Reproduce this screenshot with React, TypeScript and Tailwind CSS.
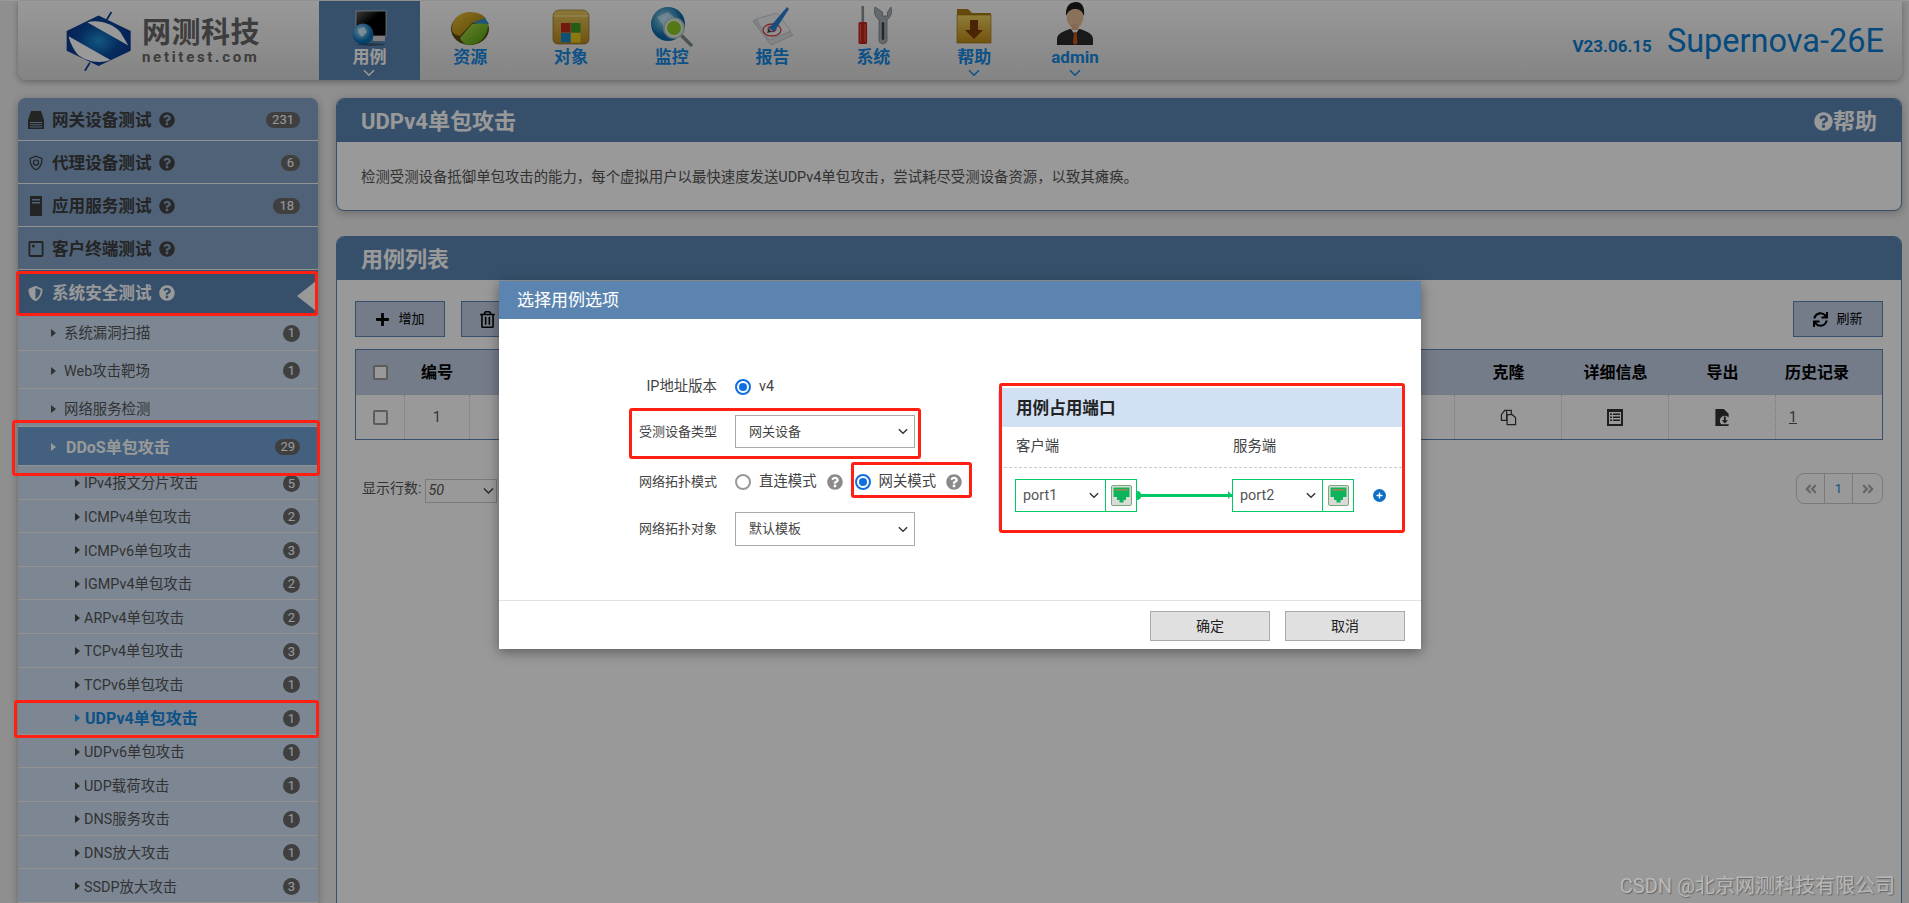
import React from "react";
import { FaQuestionCircle, FaPlus, FaSync, FaRegTrashAlt, FaShieldAlt, FaAngleDoubleLeft, FaAngleDoubleRight } from "react-icons/fa";

const Chevron = ({ className = "" }: { className?: string }) => (
  <svg viewBox="0 0 12 8" className={className} fill="none" stroke="currentColor" strokeWidth="1.6">
    <path d="M1 1.2 L6 6.2 L11 1.2" />
  </svg>
);

const Caret = ({ color = "#555" }: { color?: string }) => (
  <svg viewBox="0 0 5 8" className="w-[5px] h-[8px] shrink-0" fill={color}>
    <path d="M0 0 L5 4 L0 8 Z" />
  </svg>
);

const IconMonitor = () => (
  <svg viewBox="0 0 44 38" className="w-[44px] h-[38px]">
    <defs>
      <linearGradient id="scr" x1="0" y1="0" x2="1" y2="1"><stop offset="0" stopColor="#666" /><stop offset="0.45" stopColor="#000" /></linearGradient>
      <radialGradient id="glb" cx="0.4" cy="0.35"><stop offset="0" stopColor="#a6e4fa" /><stop offset="1" stopColor="#0d6fb5" /></radialGradient>
    </defs>
    <rect x="9" y="2" width="30" height="25" fill="url(#scr)" stroke="#ddd" strokeWidth="0.7" />
    <rect x="26" y="27" width="12" height="5" fill="#d0d0d0" />
    <circle cx="16" cy="25" r="10.5" fill="url(#glb)" />
    <path d="M11 20 L17 18 L20 23 L15 28 L12 25 Z" fill="#dff3fb" opacity="0.8" />
    <ellipse cx="24" cy="35.5" rx="14" ry="1.5" fill="#000" opacity="0.3" />
  </svg>
);

const IconPie = () => (
  <svg viewBox="0 0 44 38" className="w-[44px] h-[38px]">
    <defs>
      <linearGradient id="py" x1="0" y1="0" x2="1" y2="1"><stop offset="0" stopColor="#e8c23a" /><stop offset="1" stopColor="#9a7100" /></linearGradient>
      <linearGradient id="pg" x1="0" y1="0" x2="1" y2="1"><stop offset="0" stopColor="#b4e04a" /><stop offset="1" stopColor="#4c9a12" /></linearGradient>
    </defs>
    <ellipse cx="22" cy="20" rx="19" ry="16" fill="#5b4a10" />
    <path d="M4 20 C4 8 14 3 22 3 C30 3 36 6 38 10 L24 14 L12 27 C7 26 4 24 4 20 Z" fill="url(#py)" />
    <path d="M24 15 L40 13 C41 25 33 36 21 36 C17 36 14 33 12 29 Z" fill="url(#pg)" />
    <path d="M24 14 L37 9 L41 15 Z" fill="#2d8fc9" />
  </svg>
);

const IconFolderWin = () => (
  <svg viewBox="0 0 44 38" className="w-[44px] h-[38px]">
    <defs><linearGradient id="fg" x1="0" y1="0" x2="0" y2="1"><stop offset="0" stopColor="#e8c860" /><stop offset="1" stopColor="#b8881e" /></linearGradient></defs>
    <path d="M4 8 C4 3 7 1 11 1 H33 C37 1 40 3 40 8 V30 C40 33 38 35 35 35 H9 C6 35 4 33 4 30 Z" fill="url(#fg)" stroke="#7d5c14" strokeWidth="0.6" />
    <path d="M5 7 H39" stroke="#f6e6a6" strokeWidth="1" />
    <rect x="12" y="14" width="9.5" height="9.5" fill="#c42a1c" />
    <rect x="22" y="14" width="9.5" height="9.5" fill="#3f9c22" />
    <rect x="12" y="24" width="9.5" height="9.5" fill="#1688c6" />
    <rect x="22" y="24" width="9.5" height="9.5" fill="#e6c81e" />
  </svg>
);

const IconSearchGlobe = () => (
  <svg viewBox="0 0 44 42" className="w-[44px] h-[42px]">
    <defs><radialGradient id="g4" cx="0.4" cy="0.35"><stop offset="0" stopColor="#9fdcf0" /><stop offset="1" stopColor="#0c6aa6" /></radialGradient></defs>
    <circle cx="18" cy="19" r="17" fill="url(#g4)" />
    <path d="M7 12 L18 7 L24 12 L14 22 Z" fill="#d9f1f8" opacity="0.6" />
    <path d="M31 30 L41 40" stroke="#7d8b92" strokeWidth="3.4" strokeLinecap="round" />
    <circle cx="24" cy="23" r="10" fill="#ddeedd" stroke="#b8c4c4" strokeWidth="1.6" />
    <circle cx="24" cy="23" r="7" fill="#8cc825" />
  </svg>
);

const IconReport = () => (
  <svg viewBox="0 0 44 42" className="w-[44px] h-[42px]">
    <path d="M2 16 L24 10 L42 30 L20 40 Z" fill="#d9dde2" stroke="#a4a8ac" strokeWidth="0.6" />
    <path d="M5 14 L26 8 L40 26 L18 35 Z" fill="#eef0f3" stroke="#b0b4b8" strokeWidth="0.6" />
    <ellipse cx="21" cy="25" rx="9" ry="6" fill="none" stroke="#d84040" strokeWidth="1.3" />
    <ellipse cx="21" cy="24" rx="4" ry="2.6" fill="none" stroke="#d84040" strokeWidth="1.1" />
    <path d="M18 23 L36 2 L38 4 L23 27 Z" fill="#2a7fd0" />
    <path d="M18 23 L20 27 L16 28 Z" fill="#444" />
  </svg>
);

const IconTools = () => (
  <svg viewBox="0 0 44 42" className="w-[44px] h-[42px]">
    <rect x="10.5" y="1" width="2.6" height="16" fill="#8a8f92" />
    <rect x="7.5" y="17" width="8.6" height="22" rx="1.5" fill="#c4231c" />
    <path d="M9.5 19 V37 M14 19 V37" stroke="#e96a5c" strokeWidth="0.8" />
    <path d="M24 2 C22 10 26 13 28 15 V35 C28 40 36 40 36 35 V15 C38 13 42 10 40 2 L36.5 7 V11 H31.5 V7 Z" fill="#a9b0b4" stroke="#6c7276" strokeWidth="0.7" />
    <rect x="30.7" y="17" width="2.6" height="18" rx="1.3" fill="#3e4448" />
  </svg>
);

const IconFolderDown = () => (
  <svg viewBox="0 0 44 42" className="w-[44px] h-[42px]">
    <defs><linearGradient id="fd" x1="0" y1="0" x2="0" y2="1"><stop offset="0" stopColor="#f0cf62" /><stop offset="1" stopColor="#bb8a14" /></linearGradient></defs>
    <path d="M5 4 H16 L20 8 H39 V38 H5 Z" fill="#a97d14" />
    <rect x="5" y="10" width="34" height="28" fill="url(#fd)" stroke="#8d6a10" strokeWidth="0.6" />
    <path d="M18 15 H26 V25 H31 L22 34 L13 25 H18 Z" fill="#7d3d08" />
  </svg>
);

const IconMan = () => (
  <svg viewBox="0 0 44 46" className="w-[44px] h-[46px]">
    <path d="M4 44 V38 C4 32 12 30 17 28 H27 C32 30 40 32 40 38 V44 Z" fill="#2a2a2a" />
    <path d="M18 28 L22 34 L26 28 Z" fill="#f2f2f2" />
    <path d="M21 31 H23.4 L24.6 42 L22.2 44 L20 42 Z" fill="#c8561c" />
    <ellipse cx="22" cy="16" rx="8.4" ry="11" fill="#e7bd96" />
    <rect x="18.5" y="23" width="7" height="6" fill="#e0b08a" />
    <path d="M13 15 C12 4 18 1 23 1 C30 1 32 8 31 15 C29 10 27 8 22 8 C18 8 15 10 13 15 Z" fill="#1c1c1c" />
  </svg>
);

const Logo = () => (
  <svg viewBox="15 10 205 185" className="w-[68px] h-[62px]">
    <defs>
      <radialGradient id="lg" cx="0.5" cy="0.5" r="0.6"><stop offset="0" stopColor="#1f93d6" /><stop offset="0.5" stopColor="#0b4ca0" /><stop offset="1" stopColor="#0a2f86" /></radialGradient>
    </defs>
    <path d="M116 26 L213 72 V132 L116 178 L20 132 V72 Z" fill="url(#lg)" />
    <path d="M82 46 C115 36 160 50 182 76 L206 116 Z" fill="#fff" />
    <path d="M26 88 L152 160 C120 172 80 165 55 145 C42 130 30 108 26 88 Z" fill="#fff" />
    <path d="M140 40 L155 15" stroke="#0a3a90" strokeWidth="5" />
    <path d="M90 168 L75 192" stroke="#0a3a90" strokeWidth="5" />
  </svg>
);

const PortIcon = () => (
  <svg viewBox="0 0 21 21" className="w-[21px] h-[21px]">
    <rect x="0.5" y="0.5" width="20" height="20" rx="1.5" fill="#d9dcd6" stroke="#7ea87c" />
    <path d="M2.5 2.5 H18.5 V12 H15 V15 H12.5 V17.5 H8.5 V15 H6 V12 H2.5 Z" fill="#0cb45c" />
    <rect x="4" y="4" width="13" height="1.6" fill="#9c8b50" />
  </svg>
);

const Q = ({ className = "" }: { className?: string }) => <FaQuestionCircle className={className} />;

const Badge = ({ n, wide = false }: { n: string; wide?: boolean }) => (
  <span className={`ml-auto flex items-center justify-center rounded-full bg-[#6a6a6a] text-white ${wide ? "h-[16px] px-[6px] text-[13px]" : "h-[17px] w-[17px] text-[13px]"}`}>
    {n}
  </span>
);

const topRows: { t: string; n?: string; icon: React.ReactNode }[] = [
  {
    t: "网关设备测试",
    n: "231",
    icon: (
      <svg viewBox="0 0 16 18" className="w-[16px] h-[18px]" fill="currentColor">
        <path d="M3 0 H13 L16 9 V18 H0 V9 Z M2 11 V12 H14 V11 Z M2 13.2 V14.2 H14 V13.2 Z M2 15.4 V16.4 H14 V15.4 Z" fillRule="evenodd" />
      </svg>
    ),
  },
  {
    t: "代理设备测试",
    n: "6",
    icon: (
      <svg viewBox="0 0 16 16" className="w-[16px] h-[16px]" fill="none" stroke="currentColor" strokeWidth="1.2">
        <path d="M8 1.2 L14 3.4 C14 9 12 13 8 14.8 C4 13 2 9 2 3.4 Z" />
        <circle cx="8" cy="7.6" r="2.6" />
      </svg>
    ),
  },
  {
    t: "应用服务测试",
    n: "18",
    icon: (
      <svg viewBox="0 0 16 20" className="w-[16px] h-[20px]" fill="currentColor">
        <path d="M2 0 H14 V20 H2 Z M4 3 V4.5 H12 V3 Z M4 6 V7.5 H12 V6 Z" fillRule="evenodd" />
      </svg>
    ),
  },
  {
    t: "客户终端测试",
    icon: (
      <svg viewBox="0 0 16 16" className="w-[16px] h-[16px]" fill="none" stroke="currentColor" strokeWidth="1.8">
        <rect x="1.4" y="1" width="13.2" height="14" rx="1" />
        <circle cx="5.4" cy="5" r="1.5" fill="currentColor" stroke="none" />
      </svg>
    ),
  },
];

const subRows: { t: string; n?: string; h: string }[] = [
  { t: "系统漏洞扫描", n: "1", h: "h-[37px]" },
  { t: "Web攻击靶场", n: "1", h: "h-[38px]" },
  { t: "网络服务检测", h: "h-[38px]" },
];

const childRows = [
  ["IPv4报文分片攻击", "5"],
  ["ICMPv4单包攻击", "2"],
  ["ICMPv6单包攻击", "3"],
  ["IGMPv4单包攻击", "2"],
  ["ARPv4单包攻击", "2"],
  ["TCPv4单包攻击", "3"],
  ["TCPv6单包攻击", "1"],
  ["UDPv4单包攻击", "1"],
  ["UDPv6单包攻击", "1"],
  ["UDP载荷攻击", "1"],
  ["DNS服务攻击", "1"],
  ["DNS放大攻击", "1"],
  ["SSDP放大攻击", "3"],
];

const navItems: { t: string; icon: React.ReactNode; chev?: boolean; active?: boolean }[] = [
  { t: "用例", icon: <IconMonitor />, chev: true, active: true },
  { t: "资源", icon: <IconPie /> },
  { t: "对象", icon: <IconFolderWin /> },
  { t: "监控", icon: <IconSearchGlobe /> },
  { t: "报告", icon: <IconReport /> },
  { t: "系统", icon: <IconTools /> },
  { t: "帮助", icon: <IconFolderDown />, chev: true },
  { t: "admin", icon: <IconMan />, chev: true },
];

const Sidebar = () => (
  <aside className="w-[300px] shrink-0 self-start rounded-t-lg overflow-hidden bg-[#cfe1f5] shadow-[0_2px_8px_rgba(0,0,0,0.3)]">
    {topRows.map((r) => (
      <div key={r.t} className="h-[43px] flex items-center pt-[2px] pl-[10px] pr-[18px] bg-[#84a3c6] border-b border-[#f4f4f4] text-[#3c3c3c]">
        <span className="w-[16px] flex justify-center">{r.icon}</span>
        <span className="ml-[8px] pt-[2px] text-[16.6px] font-bold">{r.t}</span>
        <Q className="ml-[7px] w-[16px] h-[16px] text-[#444]" />
        {r.n && <Badge n={r.n} wide />}
      </div>
    ))}
    <div className="h-[44px] flex items-center pt-[2px] pl-[10px] bg-[#5a85b2] text-white relative">
      <FaShieldAlt className="w-[15px] h-[15px]" />
      <span className="ml-[9px] pt-[2px] text-[16.6px] font-bold">系统安全测试</span>
      <Q className="ml-[7px] w-[16px] h-[16px]" />
      <span className="absolute right-[2px] top-[11px] w-0 h-0 border-y-[15px] border-y-transparent border-r-[19px] border-r-white" />
    </div>
    {subRows.map((r) => (
      <div key={r.t} className={`${r.h} flex items-center pt-[2px] pl-[33px] pr-[18px] border-b border-[#f4f4f4] text-[14.4px] text-[#555]`}>
        <Caret />
        <span className="ml-[8px] pt-[2px]">{r.t}</span>
        {r.n && <Badge n={r.n} />}
      </div>
    ))}
    <div className="h-[39px] flex items-center pt-[2px] pl-[33px] pr-[18px] bg-[#70a2d4] text-white border-b border-[#f4f4f4]">
      <Caret color="#fff" />
      <span className="ml-[10px] pt-[2px] text-[16px] font-bold">DDoS单包攻击</span>
      <span className="ml-auto h-[16px] px-[5px] rounded-full bg-[#6a6a6a] text-[13px] flex items-center">29</span>
    </div>
    {childRows.map(([t, n]) => {
      const on = t === "UDPv4单包攻击";
      return (
        <div key={t} className="h-[33.6px] flex items-center pt-[2px] pl-[57px] pr-[18px] border-b border-[#f4f4f4] text-[14.4px] text-[#555]">
          <Caret color={on ? "#1996f5" : "#444"} />
          <span className={on ? "ml-[5px] pt-[2px] text-[16px] font-bold text-[#1688e0]" : "ml-[4px] pt-[2px]"}>{t}</span>
          <Badge n={n} />
        </div>
      );
    })}
  </aside>
);

const ToolButton = ({ icon, label, wrap = "justify-center" }: { icon: React.ReactNode; label?: string; wrap?: string }) => (
  <div className={`h-[36px] w-[90px] flex items-center ${wrap} gap-[8px] bg-[#c1cfe4] border border-[#5a85b2] text-[13px] text-black`}>
    {icon}
    {label && <span>{label}</span>}
  </div>
);

const Check = () => <span className="block w-[15px] h-[15px] rounded-[2px] border-2 border-[#999] bg-white" />;

const columns = ["克隆", "详细信息", "导出"];

const Table = () => (
  <div className="mt-[12px] border border-[#5a85b2]">
    <div className="h-[45px] flex items-center bg-[#c1cfe4] text-[16px] font-bold text-black">
      <span className="w-[48px] flex justify-center"><Check /></span>
      <span className="w-[66px] text-center">编号</span>
      <span className="flex-1" />
      {columns.map((c) => (
        <span key={c} className="w-[107px] pl-[2px] text-center">{c}</span>
      ))}
      <span className="w-[107px] pl-[10px]">历史记录</span>
    </div>
    <div className="h-[44px] flex items-stretch text-[14px] text-[#555]">
      <span className="w-[48px] flex items-center justify-center"><Check /></span>
      <span className="w-[66px] flex items-center justify-center border-x border-dotted border-[#ccc]">1</span>
      <span className="flex-1" />
      <span className="w-[107px] flex items-center justify-center border-l border-dotted border-[#ccc]">
        <svg viewBox="0 0 18 18" className="w-[17px] h-[17px]" fill="none" stroke="#3a3a3a" strokeWidth="1.3">
          <path d="M7 1.5 H12 V6 M1.5 6 L5 1.5 H7 V12 H1.5 Z" />
          <path d="M7.5 6 H13 L16.5 9 V16.5 H7.5 Z" />
        </svg>
      </span>
      <span className="w-[107px] flex items-center justify-center border-l border-dotted border-[#ccc]">
        <svg viewBox="0 0 16 17" className="w-[16px] h-[17px]" fill="#333">
          <path d="M0 0 H16 V17 H0 Z M2 3 V15 H14 V3 Z" fillRule="evenodd" />
          <path d="M3 4.5 H5 V6 H3 Z M6 4.5 H13 V6 H6 Z M3 7.5 H5 V9 H3 Z M6 7.5 H13 V9 H6 Z M3 10.5 H5 V12 H3 Z M6 10.5 H13 V12 H6 Z" />
        </svg>
      </span>
      <span className="w-[107px] flex items-center justify-center border-l border-dotted border-[#ccc]">
        <svg viewBox="0 0 14 18" className="w-[14px] h-[17px]" fill="#333">
          <path d="M0 0 H9 L14 5 V9 A5 5 0 0 0 6 16 L6 18 H0 Z" />
          <path d="M9 8 H11 V12 H13.4 L10 15.4 L6.6 12 H9 Z M6 16.2 H14 V18 H6 Z" />
        </svg>
      </span>
      <span className="w-[107px] flex items-center pl-[13px] border-l border-dotted border-[#ccc] underline">1</span>
    </div>
  </div>
);

const Main = () => (
  <main className="ml-[18px] flex-1 flex flex-col gap-[25px]">
    <section className="h-[113px] rounded-lg border border-[#5a85b2] bg-white shadow-[0_2px_8px_rgba(0,0,0,0.25)] overflow-hidden">
      <div className="h-[43px] bg-[#5a85b2] flex items-center justify-between pt-[2px] pl-[24px] pr-[24px] text-white">
        <span className="text-[22px] font-bold">UDPv4单包攻击</span>
        <span className="flex items-center text-[22px] font-bold">
          <Q className="w-[19px] h-[19px]" />
          帮助
        </span>
      </div>
      <p className="mt-[25px] pl-[24px] text-[14.4px] text-[#555]">
        检测受测设备抵御单包攻击的能力，每个虚拟用户以最快速度发送UDPv4单包攻击，尝试耗尽受测设备资源，以致其瘫痪。
      </p>
    </section>
    <section className="h-[760px] rounded-lg border border-[#5a85b2] bg-white overflow-hidden">
      <div className="h-[43px] bg-[#5a85b2] flex items-center pt-[2px] pl-[24px] text-white">
        <span className="text-[22px] font-bold">用例列表</span>
      </div>
      <div className="pt-[21px] pl-[18px] pr-[18px]">
        <div className="flex gap-[16px]">
          <ToolButton icon={<FaPlus className="w-[15px] h-[15px]" />} label="增加" />
          <ToolButton icon={<FaRegTrashAlt className="ml-[18px] w-[15px] h-[17px]" />} wrap="justify-start" />
          <span className="ml-auto">
            <ToolButton icon={<FaSync className="w-[15px] h-[15px]" />} label="刷新" />
          </span>
        </div>
        <Table />
        <div className="mt-[33px] flex items-start">
          <span className="mt-[5px] ml-[7px] text-[14px] text-[#555]">显示行数:</span>
          <span className="ml-[4px] mt-[6px] w-[72px] h-[24px] border border-[#ccc] flex items-center justify-between px-[2px] text-[14.4px] italic text-[#555]">
            50
            <Chevron className="w-[11px] h-[8px] text-[#444]" />
          </span>
          <span className="ml-auto h-[31px] flex items-stretch border border-[#ccc] rounded-lg text-[13px]">
            <span className="w-[27px] flex items-center justify-center text-[#aaa]"><FaAngleDoubleLeft className="w-[14px] h-[14px]" /></span>
            <span className="w-[29px] flex items-center justify-center border-x border-[#ccc] text-[#1688e0]">1</span>
            <span className="w-[29px] flex items-center justify-center text-[#aaa]"><FaAngleDoubleRight className="w-[14px] h-[14px]" /></span>
          </span>
        </div>
      </div>
    </section>
  </main>
);

const Field = ({ className = "", children }: { className?: string; children: React.ReactNode }) => (
  <div className={`flex items-center ${className}`}>{children}</div>
);
const Label = ({ children, size = "text-[13px]" }: { children: React.ReactNode; size?: string }) => (
  <span className={`w-[218px] text-right ${size} text-[#444] shrink-0`}>{children}</span>
);
const Select = ({ v, h }: { v: string; h: string }) => (
  <div className={`ml-[18px] w-[180px] ${h} border border-[#aaa] flex items-center justify-between pl-[13px] pr-[6px] text-[13px] text-[#444] bg-white`}>
    {v}
    <Chevron className="w-[10px] h-[7px] text-[#333]" />
  </div>
);
const Radio = ({ on }: { on: boolean }) => (
  <span className={`w-[16px] h-[16px] rounded-full border-2 flex items-center justify-center shrink-0 ${on ? "border-[#0f6fe0]" : "border-[#999]"}`}>
    {on && <span className="w-[8px] h-[8px] rounded-full bg-[#0f6fe0]" />}
  </span>
);

const PortSelect = ({ v }: { v: string }) => (
  <div className="h-[33px] flex border border-[#00c864]">
    <div className="w-[90px] flex items-center justify-between pl-[7px] pr-[6px] text-[14.4px] text-[#555] border-r border-[#00c864]">
      {v}
      <Chevron className="w-[10px] h-[7px] text-[#333]" />
    </div>
    <div className="w-[30px] flex items-center justify-center"><PortIcon /></div>
  </div>
);

const Modal = () => (
  <div className="absolute left-[499px] top-[281px] w-[922px] h-[368px] bg-white shadow-[0_3px_12px_rgba(0,0,0,0.4)] flex flex-col">
    <div className="h-[38px] bg-[#5b85b0] flex items-center pt-[2px] pl-[18px] text-[17px] text-white">选择用例选项</div>
    <div className="h-[281px] flex items-start">
      <div className="w-[499px] pt-[50px]">
        <Field className="h-[34px] pt-[1px]">
          <Label size="text-[14.4px]">IP地址版本</Label>
          <span className="ml-[18px]"><Radio on /></span>
          <span className="ml-[8px] text-[14.4px] text-[#444]">v4</span>
        </Field>
        <Field className="mt-[12px]">
          <Label>受测设备类型</Label>
          <Select v="网关设备" h="h-[33px]" />
        </Field>
        <Field className="mt-[17px] h-[34px]">
          <Label>网络拓扑模式</Label>
          <span className="ml-[18px]"><Radio on={false} /></span>
          <span className="ml-[8px] text-[14.4px] text-[#444]">直连模式</span>
          <Q className="ml-[10px] w-[16px] h-[16px] text-[#8a8a8a]" />
          <span className="ml-[12px]"><Radio on /></span>
          <span className="ml-[8px] text-[14.4px] text-[#444]">网关模式</span>
          <Q className="ml-[10px] w-[16px] h-[16px] text-[#8a8a8a]" />
        </Field>
        <Field className="mt-[13px]">
          <Label>网络拓扑对象</Label>
          <Select v="默认模板" h="h-[34px]" />
        </Field>
      </div>
      <div className="mt-[69px] w-[404px] h-[143px] rounded-t-md border-l border-[#d1e0f2]">
        <div className="h-[39px] bg-[#d1e0f2] flex items-center pt-[4px] pl-[17px] text-[16.6px] font-bold text-[#222]">用例占用端口</div>
        <div className="h-[41px] flex items-center pl-[17px] text-[14.4px] text-[#444] border-b border-dashed border-[#ccc]">
          <span className="w-[217px]">客户端</span>
          <span>服务端</span>
        </div>
        <div className="mt-[11px] pl-[16px] flex items-center">
          <PortSelect v="port1" />
          <div className="w-[95px] h-[3px] bg-[#00c864] relative">
            <span className="absolute left-0 top-[-3px] w-[4px] h-[9px] rounded-r-full bg-[#00c864]" />
            <span className="absolute right-0 top-[-3px] w-0 h-0 border-y-[4.5px] border-y-transparent border-l-[4px] border-l-[#00c864]" />
          </div>
          <PortSelect v="port2" />
          <span className="ml-[19px] w-[13px] h-[13px] rounded-full bg-[#0f6fc6] flex items-center justify-center">
            <FaPlus className="w-[7px] h-[7px] text-white" />
          </span>
        </div>
      </div>
    </div>
    <div className="h-[49px] border-t border-[#e2e2e2] flex items-start justify-end gap-[15px] pt-[10px] pr-[16px]">
      <button className="w-[120px] h-[30px] bg-[#e0e0e0] border border-[#aaa] text-[14px] text-[#222]">确定</button>
      <button className="w-[120px] h-[30px] bg-[#e0e0e0] border border-[#aaa] text-[14px] text-[#222]">取消</button>
    </div>
  </div>
);

const redBoxes = [
  "left-[16px] top-[271px] w-[302px] h-[45px]",
  "left-[12px] top-[420px] w-[308px] h-[56px]",
  "left-[14px] top-[700px] w-[305px] h-[38px]",
  "left-[629px] top-[408px] w-[292px] h-[51px]",
  "left-[851px] top-[462px] w-[121px] h-[36px]",
  "left-[999px] top-[383px] w-[406px] h-[150px]",
];

export default function App() {
  return (
    <div className="relative w-full h-[903px] overflow-hidden bg-[#eeeeee] font-['Roboto','Noto_Sans_CJK_SC',sans-serif]">
      <div className="h-px bg-white" />
      <div className="ml-[18px] mr-[7px] h-[79px] rounded-b-lg bg-gradient-to-b from-white to-[#dcdcdc] shadow-[0_2px_6px_rgba(0,0,0,0.3)] flex">
        <div className="w-[301px] shrink-0 flex items-center pl-[47px]">
          <Logo />
          <div className="ml-[9px] flex flex-col items-start">
            <span className="text-[29px] leading-[32px] font-bold text-[#666] tracking-[0.5px]">网测科技</span>
            <span className="text-[15px] leading-[16px] font-bold text-[#666] tracking-[2.7px]">netitest.com</span>
          </div>
        </div>
        {navItems.map((n) => (
          <div key={n.t} className={`w-[100.8px] shrink-0 flex flex-col items-center ${n.active ? "bg-[#5a85b2] text-white" : "text-[#1688e0]"}`}>
            <div className="h-[46px] flex items-end justify-center">{n.icon}</div>
            <span className="text-[17px] leading-[20px] font-bold">{n.t}</span>
            {n.chev && <Chevron className="mt-[2px] w-[12px] h-[8px]" />}
          </div>
        ))}
        <div className="ml-auto flex items-baseline pr-[18px] pt-[16px] text-[#0a7cd0]">
          <span className="text-[17px] font-bold">V23.06.15</span>
          <span className="ml-[15px] text-[32.5px]">Supernova-26E</span>
        </div>
      </div>
      <div className="ml-[18px] mr-[7px] mt-[18px] flex">
        <Sidebar />
        <Main />
      </div>
      <div className="absolute inset-0 bg-black/40" />
      <Modal />
      {redBoxes.map((c) => (
        <div key={c} className={`absolute ${c} border-[3px] border-[#ff2013] rounded-[3px]`} />
      ))}
      <div className="absolute right-[14px] top-[874px] text-[20px] leading-[24px] text-[#b8b8b8] [text-shadow:1px_1px_1px_#666]">
        CSDN @北京网测科技有限公司
      </div>
    </div>
  );
}
